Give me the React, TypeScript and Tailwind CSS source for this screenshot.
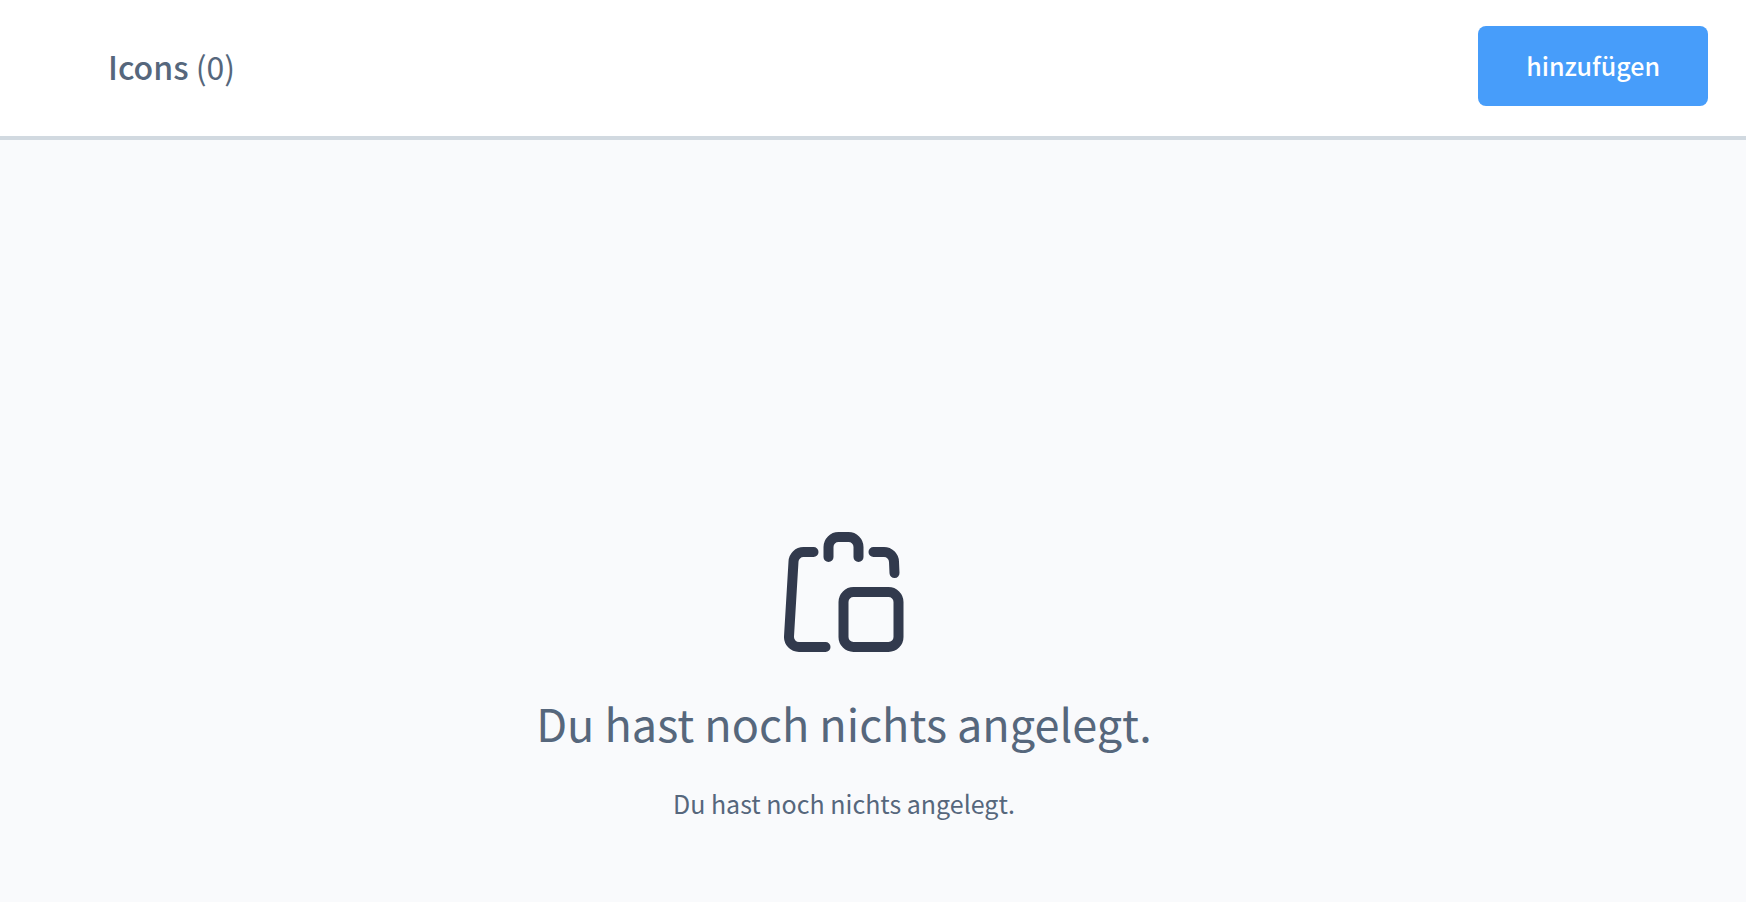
import React from 'react';

interface Props {
  title: string;
  count: number;
}

const EmptyIcon: React.FC = () => (
  <svg
    className="w-[120px] h-[120px] text-[#323a4d]"
    viewBox="0 0 24 24"
    fill="none"
    stroke="currentColor"
    strokeWidth={2}
    strokeLinecap="round"
    strokeLinejoin="round"
    aria-hidden="true"
  >
    <path d="M8.9 5V3a2 2 0 0 1 2-2h2a2 2 0 0 1 2 2v2" />
    <path d="M5.9 4H3.9a2 2 0 0 0-2 1.92L1 20.9A2 2 0 0 0 3 23h5.3" />
    <path d="M17.9 4h2.1a2 2 0 0 1 2 1.95l.1 2.25" />
    <rect x="11.9" y="12" width="11" height="11" rx="2" />
  </svg>
);

const Header: React.FC<Props> = ({ title, count }) => (
  <header className="flex items-center justify-between pt-[26px] pb-[30px] pl-27 pr-[38px] bg-white border-b-4 border-[#d1d9e0]">
    <h1 className="text-[32px] leading-[80px]">
      <span className="font-medium">{title}</span> ({count})
    </h1>
    <button
      type="button"
      className="h-20 px-12 rounded-lg bg-[#479dfa] text-white text-[25px] font-medium"
    >
      hinzufügen
    </button>
  </header>
);

export default function App() {
  return (
    <div className="min-h-screen flex flex-col bg-[#f9fafc] text-[#56677c] font-['Noto_Sans_CJK_JP','Open_Sans',sans-serif]">
      <Header title="Icons" count={0} />
      <main className="flex-1 flex flex-col items-center justify-end pr-[58px] pb-20">
        <EmptyIcon />
        <h2 className="mt-9 text-[45px] leading-[70px]">Du hast noch nichts angelegt.</h2>
        <p className="mt-[26px] text-[25px] leading-[38px]">Du hast noch nichts angelegt.</p>
      </main>
    </div>
  );
}
